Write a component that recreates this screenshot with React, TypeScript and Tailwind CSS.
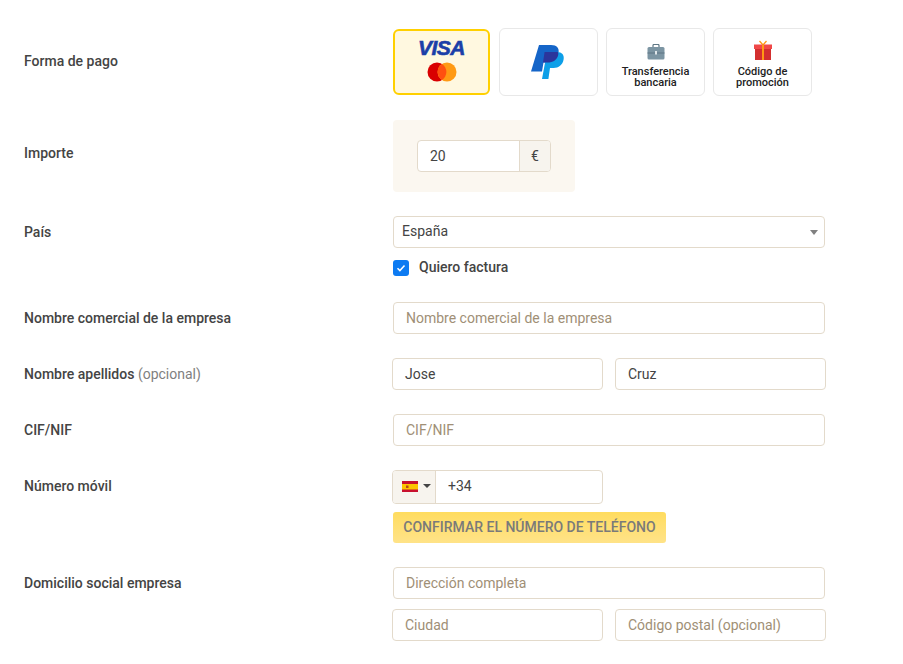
import React from "react";

const Label = ({ children, className = "" }: { children: React.ReactNode; className?: string }) => (
  <div className={`w-[369px] shrink-0 text-[14px] leading-[20px] font-medium text-[#444444] ${className}`}>{children}</div>
);

const inputBase =
  "h-[32px] rounded-[4px] border border-[#e3dacb] bg-white px-[12px] text-[14px] leading-[30px] flex items-center";

const Field = ({ value, placeholder, className = "" }: { value?: string; placeholder?: string; className?: string }) => (
  <div className={`${inputBase} ${value ? "text-[#444444]" : "text-[#a08f76]"} ${className}`}>{value ?? placeholder}</div>
);

const PayCard = ({ children, className = "" }: { children: React.ReactNode; className?: string }) => (
  <div className={`h-[68px] w-[99px] rounded-[6px] border border-[#e8e8e8] bg-white flex flex-col items-center ${className}`}>
    {children}
  </div>
);

export default function App() {
  return (
    <div className="h-[664px] w-[903px] overflow-hidden bg-white pt-[28px] pl-[24px] font-['Roboto',sans-serif]">
      <div className="flex h-[68px]">
        <Label className="pt-[23px]">Forma de pago</Label>
        <div className="flex">
          <div className="h-[66px] w-[97px] mt-[1px] mr-[9px] rounded-[6px] border-2 border-[#ffd000] bg-[#fff8e0] flex flex-col items-center pt-[5px]">
            <span className="h-[24px] text-[21px] leading-[24px] font-bold italic tracking-[-0.5px] text-[#1b3fa8] [-webkit-text-stroke:0.6px_#1b3fa8] font-['Liberation_Sans',sans-serif]">VISA</span>
            <svg width="30" height="20" viewBox="0 0 30 20" className="mt-[2px]">
              <circle cx="10" cy="10" r="9.500" fill="#d90000" />
              <circle cx="20" cy="10" r="9.500" fill="#ff9a14" />
              <path d="M15 2a9.500 9.500 0 0 1 0 16a9.500 9.500 0 0 1 0-16z" fill="#ff5010" />
            </svg>
          </div>
          <PayCard className="mr-[8px] justify-center">
            <svg width="34" height="34" viewBox="0 0 34 34" className="-ml-[2px]">
              <path d="M8 0h12c6 0 8.500 3.500 7.500 8c-1 6-5.500 9.500-11 9.500h-4l-1.500 9H0z" fill="#1565c8" />
              <path d="M16 7h10c5 0 7.500 3 6.600 7.500c-1 5.500-5 8.500-10 8.500h-3.600l-1.600 11h-6.400z" fill="#0d9fe8" />
              <path d="M16 7h10.900c.4 1 .6 2 .3 3c-1 5-5.500 7.500-10.500 7.500h-4.700l1.600-10.500z" fill="#2b359c" />
            </svg>
          </PayCard>
          <PayCard className="mr-[8px] pt-[15px]">
            <svg width="18" height="16" viewBox="0 0 18 16">
              <path d="M6 3V1.500C6 .8 6.500.5 7 .5h4c.5 0 1 .3 1 1V3" fill="none" stroke="#5f7785" strokeWidth="1.200" />
              <rect x="0.500" y="3" width="17" height="12.500" rx="1.500" fill="#7c95a3" />
              <rect x="0.500" y="8.500" width="17" height="1" fill="#5f7785" />
              <rect x="8" y="7" width="2" height="3.500" fill="#dfe6ea" />
            </svg>
            <div className="mt-[6px] text-center text-[11px] leading-[11px] font-medium text-[#222222]">Transferencia<br />bancaria</div>
          </PayCard>
          <PayCard className="pt-[11px]">
            <svg width="20" height="20" viewBox="0 0 20 20">
              <path d="M10 5L6.500 1M10 5l3.500-4" stroke="#ff9a14" strokeWidth="1.300" fill="none" />
              <rect x="2" y="8" width="16" height="12" fill="#d32f2f" />
              <rect x="1" y="4.500" width="18" height="4.500" fill="#f04848" />
              <rect x="9" y="4.500" width="2" height="15.500" fill="#ff9a14" />
            </svg>
            <div className="mt-[6px] text-center text-[11px] leading-[11px] font-medium text-[#222222]">Código de<br />promoción</div>
          </PayCard>
        </div>
      </div>

      <div className="mt-[24px] flex">
        <Label className="pt-[23px]">Importe</Label>
        <div className="h-[72px] w-[182px] rounded-[4px] bg-[#fbf7f0] pt-[20px] pl-[24px]">
          <div className="flex h-[32px] w-[134px] rounded-[4px] border border-[#e3dacb] bg-white overflow-hidden text-[14px] text-[#444444]">
            <div className="flex-1 pl-[12px] leading-[30px]">20</div>
            <div className="w-[31px] border-l border-[#e3dacb] bg-[#f7f4ee] text-center leading-[30px]">€</div>
          </div>
        </div>
      </div>

      <div className="mt-[24px] flex">
        <Label className="pt-[6px]">País</Label>
        <div>
          <div className="relative flex h-[32px] w-[432px] items-center rounded-[4px] border border-[#e3dacb] bg-white pb-[2px] pl-[8px] text-[14px] text-[#444444]">
            España
            <span className="absolute right-[6px] top-[13px] h-0 w-0 border-x-[4px] border-t-[5px] border-x-transparent border-t-[#808080]" />
          </div>
          <div className="mt-[12px] flex h-[16px] items-center">
            <span className="flex h-[16px] w-[16px] items-center justify-center rounded-[3px] bg-[#0d7bf2]">
              <svg width="12" height="12" viewBox="0 0 12 12"><path d="M2.500 6.200l2.400 2.400l4.600-5" stroke="#fff" strokeWidth="1.500" fill="none" /></svg>
            </span>
            <span className="ml-[10px] pb-[2px] text-[14px] font-medium text-[#444444]">Quiero factura</span>
          </div>
        </div>
      </div>

      <div className="mt-[26px] flex">
        <Label className="pt-[6px]">Nombre comercial de la empresa</Label>
        <Field placeholder="Nombre comercial de la empresa" className="w-[432px]" />
      </div>

      <div className="mt-[24px] flex">
        <Label className="pt-[6px]">
          Nombre apellidos <span className="font-normal text-[#808080]">(opcional)</span>
        </Label>
        <div className="-ml-[1px] flex gap-[12px]">
          <Field value="Jose" className="w-[211px]" />
          <Field value="Cruz" className="w-[211px]" />
        </div>
      </div>

      <div className="mt-[24px] flex">
        <Label className="pt-[6px]">CIF/NIF</Label>
        <Field placeholder="CIF/NIF" className="w-[432px]" />
      </div>

      <div className="mt-[24px] flex">
        <Label className="pt-[6px]">Número móvil</Label>
        <div className="-ml-[1px]">
          <div className="flex h-[34px] w-[211px] overflow-hidden rounded-[4px] border border-[#e3dacb] bg-white">
            <div className="flex w-[43px] items-center border-r border-[#e3dacb] bg-[#f7f4ee] pb-[2px] pl-[9px]">
              <svg width="16" height="11" viewBox="0 0 16 11">
                <rect width="16" height="11" fill="#c8102e" />
                <rect y="3" width="16" height="5.500" fill="#fcc400" />
                <rect x="4" y="4.500" width="2.500" height="2.500" fill="#b5471b" />
              </svg>
              <span className="ml-[5px] h-0 w-0 border-x-[4px] border-t-[4px] border-x-transparent border-t-[#444444]" />
            </div>
            <div className="pl-[12px] text-[14px] leading-[30px] text-[#444444]">+34</div>
          </div>
          <div className="mt-[8px] ml-[1px] flex h-[31px] w-[273px] items-center justify-center rounded-[3px] bg-gradient-to-b from-[#ffdc5e] to-[#ffe388] text-[14px] font-medium text-[#7a7a7a]">
            CONFIRMAR EL NÚMERO DE TELÉFONO
          </div>
        </div>
      </div>

      <div className="mt-[24px] flex">
        <Label className="pt-[6px]">Domicilio social empresa</Label>
        <div>
          <Field placeholder="Dirección completa" className="w-[432px]" />
          <div className="mt-[10px] -ml-[1px] flex gap-[12px]">
            <Field placeholder="Ciudad" className="w-[211px]" />
            <Field placeholder="Código postal (opcional)" className="w-[211px]" />
          </div>
        </div>
      </div>
    </div>
  );
}
